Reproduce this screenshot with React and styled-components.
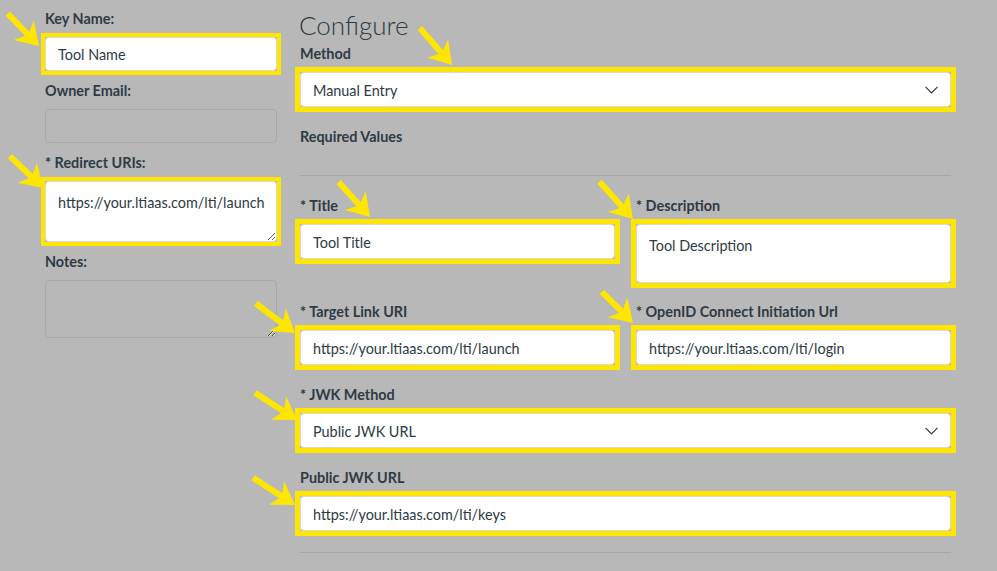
import React from 'react';
import styled, { createGlobalStyle } from 'styled-components';

const YELLOW = '#ffe600';
const INK = '#2d3b45';

const GlobalStyle = createGlobalStyle`
  html, body {
    margin: 0;
    padding: 0;
    background: #b8b8b8;
  }
  body {
    font-family: Lato, 'Liberation Sans', sans-serif;
    color: ${INK};
  }
`;

const Page = styled.div`
  position: relative;
  width: 997px;
  height: 571px;
  overflow: hidden;
  box-sizing: border-box;
  padding: 7px 0 0 45px;
  display: grid;
  grid-template-columns: 232px 651px;
  column-gap: 23px;
  align-items: start;
`;

const LeftColumn = styled.div`
  display: flex;
  flex-direction: column;
  padding-top: 2px;
`;

const RightColumn = styled.div`
  display: flex;
  flex-direction: column;
`;

const Heading = styled.h2`
  margin: 0 0 1px -1px;
  font-size: 26px;
  font-weight: 300;
  line-height: 36px;
`;

const Field = styled.div`
  display: flex;
  flex-direction: column;
  margin-bottom: ${p => p.$mb ?? 0}px;
`;

const Label = styled.label`
  font-size: 14.4px;
  font-weight: 700;
  line-height: 20px;
  margin-bottom: 8px;
`;

/* square yellow frame drawn around a field, outside its own box */
const Highlight = styled.div`
  margin: -${p => p.$w}px;
  border: ${p => p.$w}px solid ${YELLOW};
`;

const boxBase = p => `
  box-sizing: border-box;
  width: 100%;
  border: 1px solid ${p.$blank ? '#a9a9a9' : '#d6dadd'};
  border-radius: 4px;
  background: ${p.$blank ? 'transparent' : '#fff'};
  font-family: Lato, 'Liberation Sans', sans-serif;
  font-size: 14.4px;
  color: ${INK};
  outline: none;
`;

const TextInput = styled.input`
  ${p => boxBase(p)}
  display: block;
  height: ${p => p.$h ?? 35}px;
  padding: 1px 11px 0 12px;
`;

const TextArea = styled.textarea`
  ${p => boxBase(p)}
  display: block;
  height: ${p => p.$h}px;
  padding: 10px 12px;
  line-height: 22px;
  white-space: pre;
  overflow: hidden;
  resize: ${p => (p.$noresize ? 'none' : 'both')};
`;

const SelectBox = styled.div`
  ${p => boxBase(p)}
  height: 35px;
  padding: 1px 12px 0;
  display: flex;
  align-items: center;
  justify-content: space-between;
`;

const SectionTitle = styled.div`
  font-size: 14.4px;
  font-weight: 700;
  line-height: 20px;
  padding: 20px 0 28px;
  border-bottom: 1px solid #a5a5a5;
  margin-bottom: 20px;
`;

const Row = styled.div`
  display: grid;
  grid-template-columns: 1fr 1fr;
  column-gap: 21px;
  align-items: start;
  margin-bottom: ${p => p.$mb ?? 0}px;
`;

const Divider = styled.div`
  height: 1px;
  background: #a5a5a5;
  margin-top: 21px;
`;

const ArrowSvg = styled.svg`
  position: absolute;
  left: ${p => p.$x}px;
  top: ${p => p.$y}px;
  width: 1px;
  height: 1px;
  overflow: visible;
  pointer-events: none;
`;

function Arrow({ x, y, angle, len }) {
  const h = 22;
  const w = 14;
  const s = 3;
  const pts = [
    [-len, -s], [-h + 5, -s], [-h, -w], [0, 0], [-h, w], [-h + 5, s], [-len, s],
  ].map(q => q.join(',')).join(' ');
  return (
    <ArrowSvg $x={x} $y={y}>
      <g transform={`rotate(${angle})`}>
        <polygon fill={YELLOW} points={pts} />
      </g>
    </ArrowSvg>
  );
}

function Chevron() {
  return (
    <svg width="13" height="8" viewBox="0 0 13 8">
      <polyline points="0.5,0.8 6.5,6.8 12.5,0.8" fill="none" stroke={INK} strokeWidth="1.2" />
    </svg>
  );
}

const arrows = [
  { x: 39, y: 46, angle: 46, len: 45 },
  { x: 43, y: 188, angle: 44, len: 46 },
  { x: 452, y: 65, angle: 49, len: 49 },
  { x: 370, y: 217, angle: 48, len: 47 },
  { x: 633, y: 219, angle: 48, len: 50 },
  { x: 295, y: 333, angle: 37, len: 49 },
  { x: 633, y: 323, angle: 45, len: 44 },
  { x: 297, y: 420, angle: 33, len: 50 },
  { x: 295, y: 505, angle: 33, len: 50 },
];

export default function App() {
  return (
    <>
      <GlobalStyle />
      <Page>
        <LeftColumn>
          <Field $mb={10}>
            <Label>Key Name:</Label>
            <Highlight $w={4}>
              <TextInput readOnly value="Tool Name" $h={34} />
            </Highlight>
          </Field>
          <Field $mb={10}>
            <Label>Owner Email:</Label>
            <TextInput readOnly value="" $h={34} $blank />
          </Field>
          <Field $mb={10}>
            <Label>* Redirect URIs:</Label>
            <Highlight $w={4}>
              <TextArea readOnly wrap="off" value="https://your.ltiaas.com/lti/launch" $h={61} />
            </Highlight>
          </Field>
          <Field>
            <Label>Notes:</Label>
            <TextArea readOnly value="" $h={58} $blank />
          </Field>
        </LeftColumn>

        <RightColumn>
          <Heading>Configure</Heading>
          <Field>
            <Label>Method</Label>
            <Highlight $w={5}>
              <SelectBox>
                <span>Manual Entry</span>
                <Chevron />
              </SelectBox>
            </Highlight>
          </Field>
          <SectionTitle>Required Values</SectionTitle>
          <Row $mb={19}>
            <Field>
              <Label>* Title</Label>
              <Highlight $w={5}>
                <TextInput readOnly value="Tool Title" />
              </Highlight>
            </Field>
            <Field>
              <Label>* Description</Label>
              <Highlight $w={5}>
                <TextArea readOnly value="Tool Description" $h={59} $noresize />
              </Highlight>
            </Field>
          </Row>
          <Row $mb={20}>
            <Field>
              <Label>* Target Link URI</Label>
              <Highlight $w={5}>
                <TextInput readOnly value="https://your.ltiaas.com/lti/launch" />
              </Highlight>
            </Field>
            <Field>
              <Label>* OpenID Connect Initiation Url</Label>
              <Highlight $w={5}>
                <TextInput readOnly value="https://your.ltiaas.com/lti/login" />
              </Highlight>
            </Field>
          </Row>
          <Field $mb={20}>
            <Label>* JWK Method</Label>
            <Highlight $w={5}>
              <SelectBox>
                <span>Public JWK URL</span>
                <Chevron />
              </SelectBox>
            </Highlight>
          </Field>
          <Field>
            <Label>Public JWK URL</Label>
            <Highlight $w={5}>
              <TextInput readOnly value="https://your.ltiaas.com/lti/keys" />
            </Highlight>
          </Field>
          <Divider />
        </RightColumn>

        {arrows.map((a, i) => (
          <Arrow key={i} {...a} />
        ))}
      </Page>
    </>
  );
}
